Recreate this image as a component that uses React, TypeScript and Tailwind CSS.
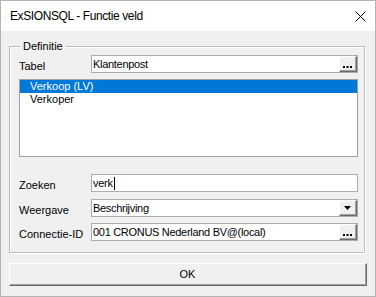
import React from "react";

const Dots = () => (
  <svg width="9" height="2" viewBox="0 0 9 2" className="block">
    <rect x="0" y="0" width="2" height="2" fill="#000" />
    <rect x="3.5" y="0" width="2" height="2" fill="#000" />
    <rect x="7" y="0" width="2" height="2" fill="#000" />
  </svg>
);

const Arrow = () => (
  <svg width="7" height="4" viewBox="0 0 7 4" className="block">
    <path d="M0 0 H7 L3.5 4 Z" fill="#000" />
  </svg>
);

function SideButton({ children, dots }: { children: React.ReactNode; dots?: boolean }) {
  return (
    <div className="w-[18px] h-full shrink-0 border-t border-l border-t-[#ffffff] border-l-[#ffffff] border-r border-b border-r-[#696969] border-b-[#696969] bg-[#f0f0f0]">
      <div
        className={
          "w-full h-full border-r border-b border-r-[#a0a0a0] border-b-[#a0a0a0] flex justify-center " +
          (dots ? "items-end pb-[2px]" : "items-center")
        }
      >
        {children}
      </div>
    </div>
  );
}

function Row({ label, children, className }: { label: string; children: React.ReactNode; className?: string }) {
  return (
    <div className={"flex items-start h-[18px] " + (className ?? "")}>
      <div className="w-[72px] shrink-0 pt-[5px] leading-[13px] text-[11px] text-black">{label}</div>
      {children}
    </div>
  );
}

function Field({ value, button, caret }: { value: string; button?: "dots" | "arrow"; caret?: boolean }) {
  return (
    <div className="flex-1 h-[18px] bg-white border border-[#acacac] flex items-stretch">
      <div className="flex-1 pl-[1px] flex items-center text-[11px] leading-[13px] tracking-[-0.3px] text-black whitespace-nowrap overflow-hidden">
        <span>{value}</span>
        {caret && <span className="inline-block w-[1px] h-[13px] bg-black ml-[1px]" />}
      </div>
      {button === "dots" && (
        <SideButton dots>
          <Dots />
        </SideButton>
      )}
      {button === "arrow" && (
        <SideButton>
          <Arrow />
        </SideButton>
      )}
    </div>
  );
}

export default function App() {
  return (
    <div className="w-[376px] h-[297px] border border-[#b4b4b4] bg-[#f0f0f0] flex flex-col font-['Liberation_Sans',Arial,sans-serif] text-black overflow-hidden">
      <div className="h-[30px] shrink-0 bg-white flex items-center justify-between pl-[9px] pr-[9px]">
        <span className="text-[12px] leading-[16px] tracking-[-0.4px] text-black">ExSIONSQL - Functie veld</span>
        <svg width="11" height="11" viewBox="0 0 11 11" className="block">
          <path d="M0.5 0.5 L10.5 10.5 M10.5 0.5 L0.5 10.5" stroke="#000" strokeWidth="1" />
        </svg>
      </div>
      <div className="flex-1 pl-[8px] pr-[10px] pt-[15px] flex flex-col">
        <div className="relative border border-[#bcbcbc] shadow-[1px_1px_0_#ffffff,inset_1px_1px_0_#ffffff] pl-[9px] pr-[6px] pt-[8px] pb-[11px] flex flex-col">
          <span className="absolute left-[10px] top-[-8px] px-[3px] bg-[#f0f0f0] text-[11px] leading-[14px]">Definitie</span>
          <Row label="Tabel">
            <Field value="Klantenpost" button="dots" />
          </Row>
          <div className="mt-[6px] h-[78px] bg-white border border-[#a0a0a0] flex flex-col text-[11px] leading-[13px]">
            <div className="h-[13px] bg-[#0078d7] text-white pl-[10px]">Verkoop (LV)</div>
            <div className="h-[13px] pl-[10px]">Verkoper</div>
          </div>
          <Row label="Zoeken" className="mt-[17px]">
            <Field value="verk" caret />
          </Row>
          <Row label="Weergave" className="mt-[7px]">
            <Field value="Beschrijving" button="arrow" />
          </Row>
          <Row label="Connectie-ID" className="mt-[6px]">
            <Field value="001 CRONUS Nederland BV@(local)" button="dots" />
          </Row>
        </div>
        <button className="mt-[10px] h-[23px] w-[358px] border-t border-l border-t-[#ffffff] border-l-[#ffffff] border-r border-b border-r-[#696969] border-b-[#696969] bg-[#f0f0f0] p-0">
          <div className="w-full h-full border-r border-b border-r-[#a0a0a0] border-b-[#a0a0a0] flex items-center justify-center text-[11px] leading-[13px]">
            OK
          </div>
        </button>
      </div>
    </div>
  );
}
